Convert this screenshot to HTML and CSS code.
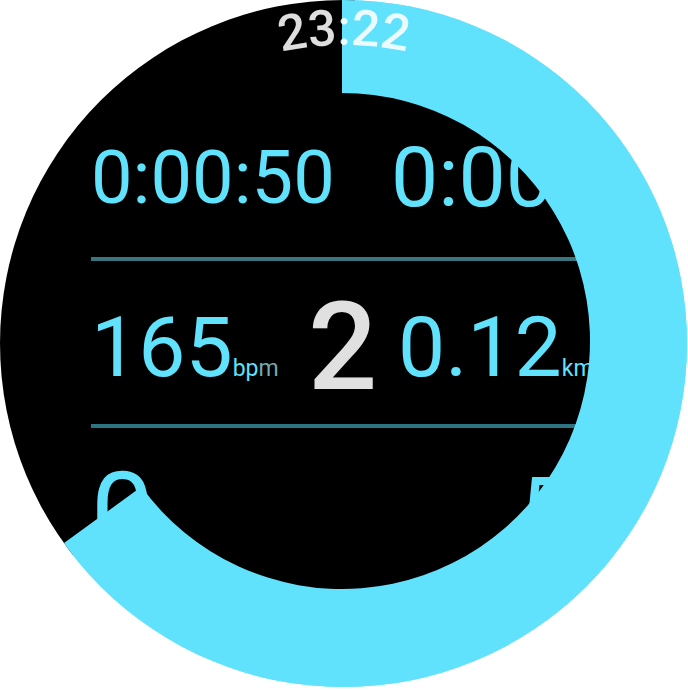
FILE: index.html
```html
<!DOCTYPE html>
<html lang="en">
<head>
<meta charset="utf-8">
<meta name="viewport" content="width=device-width, initial-scale=1">
<title>Workout</title>
<link rel="stylesheet" href="styles.css">
</head>
<body>
<main class="face">
  <section class="stats">
    <div class="row row-times">
      <span class="value value-small">0:00:50</span>
      <span class="value">0:00</span>
    </div>
    <div class="row row-metrics">
      <span class="value">165<span class="unit">bp<span class="unit-dim">m</span></span></span>
      <span class="lap">2</span>
      <span class="value">0.12<span class="unit">km</span></span>
    </div>
    <div class="row row-pace">
      <span class="value value-large">0</span>
      <span class="value value-medium">5</span>
    </div>
  </section>
  <svg class="ring" viewBox="0 0 687 687">
    <path class="progress" d="M342 -59A400 400 0 1 1 18.4 576.2L141.4 486.8A248 248 0 1 0 342 93Z"/>
    <path id="clock-arc" class="arc" d="M46 343A298 298 0 0 1 642 343"/>
    <text class="clock"><textPath href="#clock-arc" startOffset="50%">23:22</textPath></text>
  </svg>
</main>
</body>
</html>
```
FILE: styles.css
```css
* {
  box-sizing: border-box;
}

body {
  margin: 0;
  background: #fff;
  color: #60e2fc;
  font-family: Roboto, "Liberation Sans", sans-serif;
}

.face {
  position: relative;
  width: calc(100% - 1px);
  max-width: 720px;
  aspect-ratio: 1;
  clip-path: circle(50%);
  background:
    radial-gradient(circle closest-side, #000 90%, transparent 90%),
    conic-gradient(#000 2deg, #60e2fc 2deg 232deg, #000 232deg);
}

.stats {
  padding: 96px 40px 0 91px;
}

.row {
  display: grid;
  align-items: center;
  height: 165px;
  white-space: nowrap;
}

.row-times {
  grid-template-columns: 300fr 256fr;
  padding-top: 3px;
  border-bottom: 4px solid #3b7481;
}

.row-metrics {
  grid-template-columns: 217fr 90fr 249fr;
  height: 167px;
  padding-top: 11px;
  border-bottom: 4px solid #2d7482;
}

.row-pace {
  grid-template-columns: 428fr 128fr;
  padding-top: 5px;
}

.row > * {
  min-width: 0;
}

.value {
  font-size: 84px;
  line-height: 100px;
}

.value-small {
  font-size: 74px;
}

.value-medium {
  font-size: 96px;
}

.value-large {
  font-size: 112px;
}

.unit {
  font-size: 23px;
  line-height: 24px;
}

.unit-dim {
  color: #73a9b3;
}

.lap {
  color: #e0e0e0;
  font-size: 122px;
  font-weight: 500;
  line-height: 122px;
}

.ring {
  position: absolute;
  inset: 0;
  width: 100%;
  height: 100%;
}

.progress {
  fill: #60e2fc;
}

.arc {
  fill: none;
}

.clock {
  fill: #fff;
  fill-opacity: 0.87;
  font-size: 50px;
  font-weight: 500;
  text-anchor: middle;
}
```
